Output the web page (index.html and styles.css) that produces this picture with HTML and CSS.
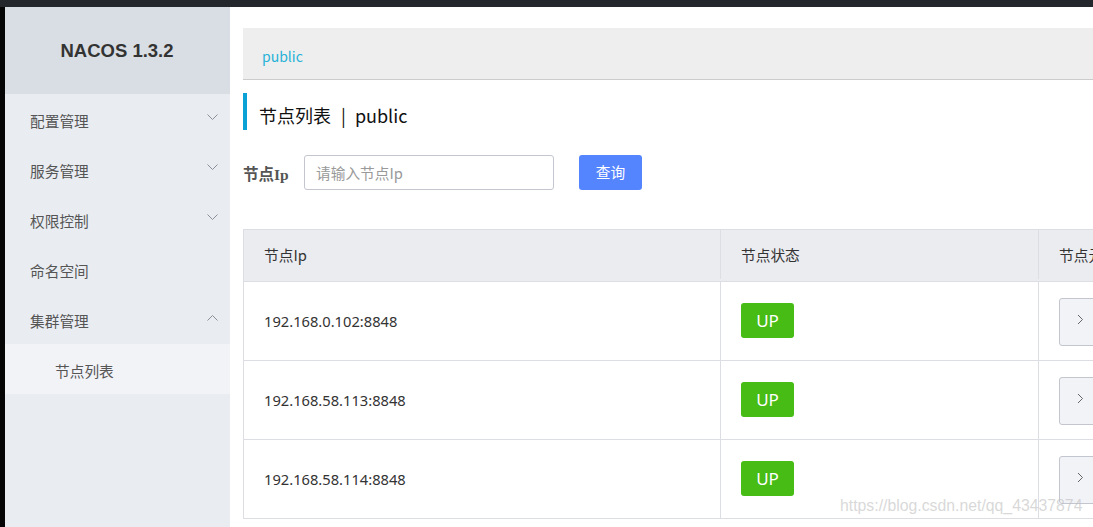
FILE: index.html
```html
<!DOCTYPE html>
<html lang="zh">
<head>
<meta charset="utf-8">
<title>Nacos</title>
<link rel="stylesheet" href="styles.css">
</head>
<body>
<div class="topbar"></div>
<div class="layout">
  <div class="edge"></div>
  <aside class="sidebar">
    <div class="brand">NACOS 1.3.2</div>
    <nav class="menu">
      <div class="item"><span>配置管理</span><svg class="chev" width="11" height="7" viewBox="0 0 11 7"><polyline points="0.5,0.5 5.5,5.5 10.5,0.5" fill="none" stroke="#8a8f99" stroke-width="1"/></svg></div>
      <div class="item"><span>服务管理</span><svg class="chev" width="11" height="7" viewBox="0 0 11 7"><polyline points="0.5,0.5 5.5,5.5 10.5,0.5" fill="none" stroke="#8a8f99" stroke-width="1"/></svg></div>
      <div class="item"><span>权限控制</span><svg class="chev" width="11" height="7" viewBox="0 0 11 7"><polyline points="0.5,0.5 5.5,5.5 10.5,0.5" fill="none" stroke="#8a8f99" stroke-width="1"/></svg></div>
      <div class="item"><span>命名空间</span></div>
      <div class="item"><span>集群管理</span><svg class="chev" width="11" height="7" viewBox="0 0 11 7"><polyline points="0.5,6.5 5.5,1.5 10.5,6.5" fill="none" stroke="#8a8f99" stroke-width="1"/></svg></div>
      <div class="item sub active"><span>节点列表</span></div>
    </nav>
  </aside>
  <main class="main">
    <div class="crumb"><span>public</span></div>
    <h1 class="title"><span>节点列表</span><span class="sep">|</span><span>public</span></h1>
    <div class="search">
      <label class="label">节点Ip</label>
      <div class="input">请输入节点Ip</div>
      <button class="btn">查询</button>
    </div>
    <div class="table">
      <div class="row head">
        <div class="cell c1">节点Ip</div>
        <div class="cell c2">节点状态</div>
        <div class="cell c3">节点元数据</div>
      </div>
      <div class="row">
        <div class="cell c1">192.168.0.102:8848</div>
        <div class="cell c2"><span class="badge">UP</span></div>
        <div class="cell c3"><span class="expand"><svg width="7" height="11" viewBox="0 0 7 11"><polyline points="1,1 5.5,5.5 1,10" fill="none" stroke="#666" stroke-width="1"/></svg></span></div>
      </div>
      <div class="row">
        <div class="cell c1">192.168.58.113:8848</div>
        <div class="cell c2"><span class="badge">UP</span></div>
        <div class="cell c3"><span class="expand"><svg width="7" height="11" viewBox="0 0 7 11"><polyline points="1,1 5.5,5.5 1,10" fill="none" stroke="#666" stroke-width="1"/></svg></span></div>
      </div>
      <div class="row">
        <div class="cell c1">192.168.58.114:8848</div>
        <div class="cell c2"><span class="badge">UP</span></div>
        <div class="cell c3"><span class="expand"><svg width="7" height="11" viewBox="0 0 7 11"><polyline points="1,1 5.5,5.5 1,10" fill="none" stroke="#666" stroke-width="1"/></svg></span></div>
      </div>
    </div>
    <div class="watermark">https://blog.csdn.net/qq_43437874</div>
  </main>
</div>
</body>
</html>
```
FILE: styles.css
```css
* { box-sizing: border-box; }
html, body { margin: 0; padding: 0; }
body {
  width: 1093px;
  height: 527px;
  overflow: hidden;
  background: #fff;
  font-family: "Noto Sans CJK SC", "Noto Sans", sans-serif;
  font-size: 14.7px;
  color: #333;
}
.topbar { height: 7px; background: #24282d; }
.layout { display: flex; height: 520px; }
.edge { width: 5px; background: #050505; flex: none; }
.sidebar { width: 225px; flex: none; background: #e9edf2; }
.brand {
  height: 87px;
  background: #d9dee4;
  display: flex;
  align-items: center;
  justify-content: center;
  font-family: "Liberation Sans", Arial, sans-serif;
  font-weight: bold;
  font-size: 18.5px;
  color: #333;
  padding-top: 1px;
  padding-right: 1px;
}
.menu { display: flex; flex-direction: column; }
.item {
  height: 50px;
  display: flex;
  align-items: center;
  justify-content: space-between;
  padding: 3px 12px 0 25px;
  color: #555;
  font-size: 14.7px;
}
.item .chev { margin-top: -6px; }
.item.sub { padding-left: 50px; }
.item.active { background: #f2f3f7; }
.main {
  flex: 1;
  min-width: 0;
  overflow: hidden;
  padding: 21px 0 0 13px;
  position: relative;
}
.crumb {
  height: 52px;
  background: #eeeeee;
  border-bottom: 1px solid #cccccc;
  display: flex;
  align-items: center;
  padding-left: 19px;
  padding-top: 4px;
  color: #27b2d8;
  font-size: 14px;
}
.title {
  margin: 13px 0 0 0;
  height: 37px;
  border-left: 4px solid #09a1d6;
  padding-left: 12px;
  padding-top: 6px;
  font-weight: normal;
  font-size: 18px;
  color: #111;
  display: flex;
  align-items: center;
}
.title .sep { margin: 0 9px 0 10px; }
.search {
  margin-top: 25px;
  height: 35px;
  display: flex;
  align-items: center;
}
.label {
  width: 61px;
  font-family: "Liberation Serif", "Noto Sans CJK SC", serif;
  font-weight: bold;
  font-size: 15.5px;
  color: #555;
  padding-top: 0;
}
.input {
  width: 250px;
  height: 35px;
  border: 1px solid #c4c6cf;
  border-radius: 3px;
  display: flex;
  align-items: center;
  padding-left: 11px;
  color: #999;
  font-size: 14.7px;
}
.btn {
  margin-left: 25px;
  width: 63px;
  height: 35px;
  border: none;
  border-radius: 3px;
  background: #5584ff;
  color: #fff;
  font-family: "Noto Sans CJK SC", sans-serif;
  font-size: 14.7px;
  padding: 0 0 2px 0;
}
.table {
  margin-top: 39px;
  width: 1100px;
  border-left: 1px solid #dcdee3;
}
.row { display: flex; height: 79px; border-bottom: 1px solid #dcdee3; }
.row.head { height: 53px; background: #ebecf0; border-top: 1px solid #dcdee3; padding-bottom: 2px; }
.cell {
  display: flex;
  align-items: center;
  padding-left: 20px;
  border-right: 1px solid #dcdee3;
  font-size: 14.7px;
}
.row .c1 { font-family: "Noto Sans", sans-serif; color: #333; }
.row.head .cell { font-family: "Noto Sans CJK SC", sans-serif; color: #333; }
.c1 { width: 477px; }
.c2 { width: 318px; }
.c3 { width: 300px; }
.badge {
  width: 53px;
  height: 35px;
  border-radius: 3px;
  background: #46bc15;
  color: #fff;
  font-family: "Noto Sans", sans-serif;
  font-size: 17px;
  display: flex;
  align-items: center;
  justify-content: center;
  margin-top: -1px;
}
.expand {
  width: 60px;
  height: 48px;
  border: 1px solid #c4c6cf;
  border-radius: 3px;
  background: #f2f3f7;
  display: flex;
  align-items: center;
  padding-left: 17px;
  margin-top: 1px;
}
.expand svg { margin-top: -4px; }
.watermark {
  position: absolute;
  left: 610px;
  top: 490px;
  font-family: "Liberation Sans", Arial, sans-serif;
  font-size: 15.8px;
  color: rgba(190, 190, 190, 0.6);
}
```
